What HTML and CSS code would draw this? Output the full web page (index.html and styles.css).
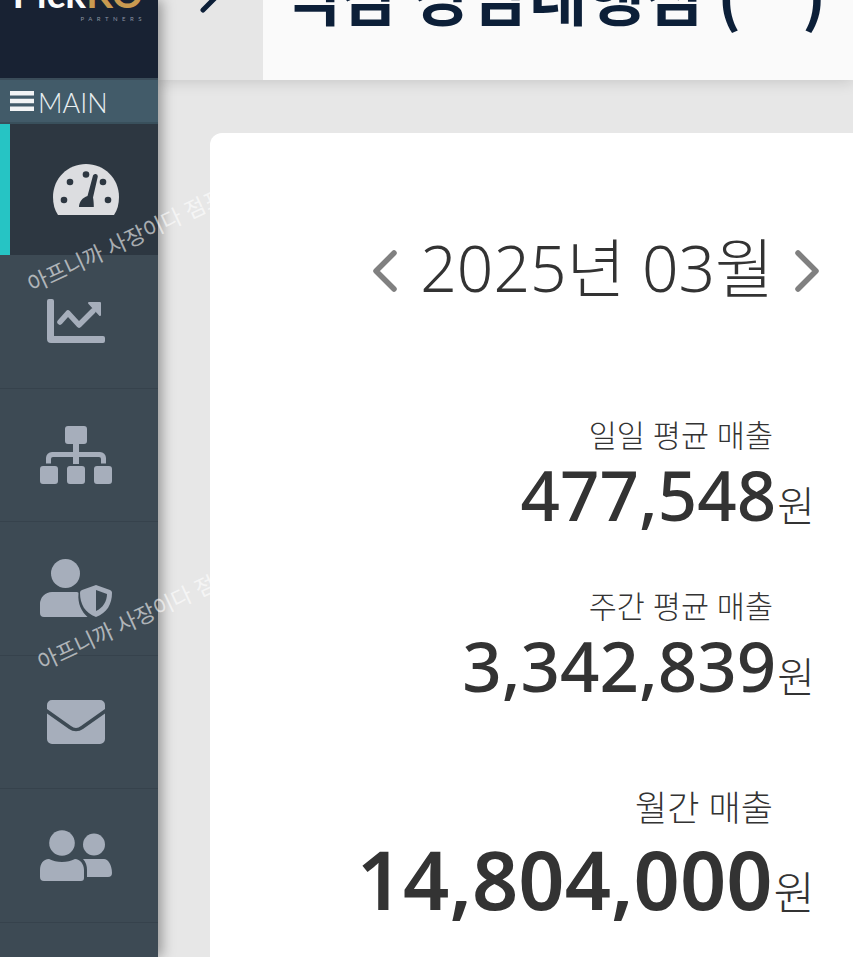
FILE: index.html
```html
<!DOCTYPE html>
<html>
<head>
    <meta charset="utf-8">
    <title>Dashboard</title>
    <link rel="stylesheet" href="styles.css">
</head>
<body>
    <div class="app">
        <aside class="sidebar">
            <div class="brand">
                <div class="logo"><span class="logo-white">Pick</span><span class="logo-gold">KO</span></div>
                <div class="logo-sub">PARTNERS</div>
            </div>
            <div class="main-bar">
                <svg class="bars" viewBox="0 0 24 20"><path d="M0 0h24v4.500H0zM0 7.700h24v4.500H0zM0 15.500h24V20H0z"/></svg>
                <span>MAIN</span>
            </div>
            <nav class="menu">
                <a class="menu-item active">
                    <svg width="66" height="52" viewBox="0 0 66 52"><path class="icon-light" d="M33 0C15 0 0 14 0 33c0 7 1.500 13 5 18h56c3.500-5 5-11 5-18C66 14 51 0 33 0z"/><g class="gauge-marks"><circle cx="33" cy="10.500" r="3.300"/><circle cx="17" cy="18" r="3.300"/><circle cx="50" cy="18" r="3.300"/><circle cx="11" cy="36" r="3.300"/><circle cx="55" cy="36" r="3.300"/><path d="M40 11.500a2.500 2.500 0 0 1 4.800 1L40 33.500c.5 2 .8 6 .8 9.500H26c0-5 3.500-9.500 8.500-11z"/></g></svg>
                </a>
                <a class="menu-item">
                    <svg width="58" height="44" viewBox="0 0 58 44"><path class="icon" d="M0 2a2 2 0 0 1 2-2h3a2 2 0 0 1 2 2v35h49a2 2 0 0 1 2 2v3a2 2 0 0 1-2 2H4a4 4 0 0 1-4-4z"/><path class="chart-line" d="M13 23l8-9 11 12 14-14"/><path class="icon" d="M42 3h11a1 1 0 0 1 1 1v12a1 1 0 0 1-1.700.700L41.300 4.700A1 1 0 0 1 42 3z"/></svg>
                </a>
                <a class="menu-item">
                    <svg width="72" height="58" viewBox="0 0 72 58"><path class="icon" d="M28 0h16a3 3 0 0 1 3 3v12a3 3 0 0 1-3 3h-5v8h21a6 6 0 0 1 6 6v5.500h-5V33a2 2 0 0 0-2-2H39v7h-6v-7H13a2 2 0 0 0-2 2v4.500H6V32a6 6 0 0 1 6-6h21v-8h-5a3 3 0 0 1-3-3V3a3 3 0 0 1 3-3zM3 40h12a3 3 0 0 1 3 3v12a3 3 0 0 1-3 3H3a3 3 0 0 1-3-3V43a3 3 0 0 1 3-3zM30 40h12a3 3 0 0 1 3 3v12a3 3 0 0 1-3 3H30a3 3 0 0 1-3-3V43a3 3 0 0 1 3-3zM57 40h12a3 3 0 0 1 3 3v12a3 3 0 0 1-3 3H57a3 3 0 0 1-3-3V43a3 3 0 0 1 3-3z"/></svg>
                </a>
                <a class="menu-item">
                    <svg width="72" height="58" viewBox="0 0 72 58"><circle class="icon" cx="25.500" cy="14.500" r="14.500"/><path class="icon" d="M12 33h24c1.500 0 3 .5 2.500 1.500-1 10 3 18 9 23.500H4a4 4 0 0 1-4-4v-9a12 12 0 0 1 12-12z"/><path class="icon" fill-rule="evenodd" d="M56 26l14 5a3 3 0 0 1 2 3c0 11-5 20-16 24-11-4-16-13-16-24a3 3 0 0 1 2-3zM56 31v21c7-3 11-10 11-17z"/></svg>
                </a>
                <a class="menu-item">
                    <svg width="58" height="44" viewBox="0 0 58 44"><path class="icon" d="M5 0h48a5 5 0 0 1 5 5v4L34 26a8 8 0 0 1-10 0L0 9V5a5 5 0 0 1 5-5zM0 13.500L22 29a12 12 0 0 0 14 0l22-15.500V39a5 5 0 0 1-5 5H5a5 5 0 0 1-5-5z"/></svg>
                </a>
                <a class="menu-item">
                    <svg width="72" height="51" viewBox="0 0 72 51"><circle class="icon" cx="22" cy="13" r="12.800"/><circle class="icon" cx="54" cy="14.500" r="11"/><path class="icon" d="M9 29c4 2 8 3 13 3s9-1 13-3c5 0 9 5 9 11v8a3 3 0 0 1-3 3H4a4 4 0 0 1-4-4v-7c0-6 3-11 9-11zM43 29h21c4 0 8 6 8 14a4 4 0 0 1-4 4H47v-7c0-4-1-8-4-11z"/></svg>
                </a>
            </nav>
        </aside>

        <div class="page">
            <header class="topbar">
                <div class="toggle">
                    <svg width="24" height="14" viewBox="0 0 24 14"><path d="M4 10L16 -2"/></svg>
                </div>
                <h1 class="shop-title"><span>역삼 상담대행점 (&nbsp;&nbsp;&nbsp;&nbsp;&#8202;)</span></h1>
            </header>
            <section class="card">
                <div class="month-nav">
                    <svg class="arrow arrow-prev" width="24" height="42" viewBox="0 0 24 42"><path d="M21 3L3 21l18 18"/></svg>
                    <span class="month">2025년 03월</span>
                    <svg class="arrow" width="24" height="42" viewBox="0 0 24 42"><path d="M3 3l18 18L3 39"/></svg>
                </div>
                <div class="stat stat-daily">
                    <div class="stat-label">일일 평균 매출</div>
                    <div class="stat-value"><strong>477,548</strong><span class="unit">원</span></div>
                </div>
                <div class="stat stat-weekly">
                    <div class="stat-label">주간 평균 매출</div>
                    <div class="stat-value"><strong>3,342,839</strong><span class="unit">원</span></div>
                </div>
                <div class="stat stat-monthly">
                    <div class="stat-label">월간 매출</div>
                    <div class="stat-value"><strong>14,804,000</strong><span class="unit">원</span></div>
                </div>
            </section>
        </div>

        <div class="watermark wm-one">아프니까 사장이다 점포거래</div>
        <div class="watermark wm-two">아프니까 사장이다 점포거래</div>
    </div>
</body>
</html>
```

FILE: styles.css
```css
html, body {
    margin: 0;
    height: 100%;
    overflow: hidden;
}

body {
    font-family: "Noto Sans", "Noto Sans CJK KR", sans-serif;
    background: #e7e7e7;
    color: #333;
}

.app {
    position: relative;
    display: flex;
    height: 957px;
    overflow: hidden;
}

/* sidebar */
.sidebar {
    width: 158px;
    flex: none;
    background: #3d4a54;
    box-shadow: 4px 0 12px rgba(0,0,0,0.35);
    z-index: 2;
}

.brand {
    height: 78px;
    box-sizing: border-box;
    background: #182233;
    overflow: hidden;
    text-align: right;
    padding-right: 15px;
}

.logo {
    font-family: "Lato", sans-serif;
    font-weight: 700;
    font-size: 39px;
    line-height: 40px;
    margin-top: -27px;
}

.logo-white { color: #fbfbfb; }
.logo-gold { color: #c99a50; }

.logo-sub {
    font-family: "Lato", sans-serif;
    font-size: 6px;
    line-height: 8px;
    letter-spacing: 4.500px;
    margin-top: 2px;
    margin-right: -3px;
    color: #8a93a0;
}

.main-bar {
    height: 46px;
    box-sizing: border-box;
    display: flex;
    align-items: center;
    gap: 4px;
    padding-left: 10px;
    background: #425b69;
    border-top: 2px solid #3a4c59;
    border-bottom: 2px solid #39505c;
    color: #e8eef0;
    font-family: "Lato", sans-serif;
    font-weight: 300;
    font-size: 27px;
}

.main-bar span {
    position: relative;
    top: 1px;
}

.bars {
    width: 24px;
    height: 20px;
    fill: #f2f4f5;
}

.menu-item {
    height: 133.600px;
    box-sizing: border-box;
    display: flex;
    align-items: center;
    justify-content: center;
    padding-right: 6px;
    border-bottom: 1px solid #36424c;
}

.menu-item.active {
    height: 131px;
    background: #2d3741;
    border-left: 10px solid #26c4c4;
    border-bottom: none;
    padding-right: 0;
    padding-left: 4px;
}

.icon { fill: #a6aebb; }
.icon-light { fill: #dcdde0; }
.gauge-marks { fill: #2d3741; }

.chart-line {
    fill: none;
    stroke: #a6aebb;
    stroke-width: 5.500;
    stroke-linecap: round;
    stroke-linejoin: round;
}

/* content */
.page {
    flex: 1;
    min-width: 0;
}

.topbar {
    display: flex;
    height: 80px;
    box-shadow: 0 2px 14px rgba(0,0,0,0.14);
    position: relative;
}

.toggle {
    width: 105px;
    flex: none;
    background: #e6e6e6;
    padding-left: 41px;
    box-sizing: border-box;
}

.toggle svg {
    display: block;
}

.toggle path {
    fill: none;
    stroke: #0c1f38;
    stroke-width: 5;
    stroke-linecap: round;
}

.shop-title {
    flex: 1;
    display: flex;
    align-items: flex-end;
    margin: 0;
    padding: 0 0 57px 20px;
    background: #fafafa;
    color: #0c1f38;
    font-family: "Noto Sans CJK KR", sans-serif;
    font-size: 63px;
    font-weight: 700;
    line-height: 60px;
    white-space: nowrap;
    overflow: hidden;
}

.card {
    margin: 53px 0 0 52px;
    height: 900px;
    box-sizing: border-box;
    background: white;
    border-radius: 12px 0 0 12px;
    padding-right: 38px;
    text-align: right;
}

.month-nav {
    display: flex;
    align-items: center;
    justify-content: flex-end;
    gap: 21px;
    padding-top: 100px;
    margin-right: -4px;
}

.month {
    font-weight: 300;
    font-size: 64px;
    line-height: 70px;
    color: #333;
}

.arrow {
    margin-top: 6px;
}

.arrow-prev {
    margin-right: 2px;
}

.arrow path {
    fill: none;
    stroke: #808080;
    stroke-width: 5.500;
    stroke-linecap: round;
    stroke-linejoin: round;
}

.stat-label {
    font-weight: 200;
    font-size: 30.500px;
    line-height: 40px;
    padding-right: 42px;
}

.stat-value {
    line-height: 72px;
    padding-top: 3px;
    white-space: nowrap;
}

.stat-value strong {
    font-weight: 500;
    font-size: 69px;
}

.unit {
    font-weight: 200;
    font-size: 41px;
    margin-left: 1px;
}

.stat-daily { margin-top: 112px; }
.stat-weekly { margin-top: 35px; }
.stat-monthly { margin-top: 66px; }

.stat-monthly .stat-label {
    font-size: 35px;
}

.stat-monthly .stat-value {
    padding-top: 15px;
}

.stat-monthly .stat-value strong {
    font-weight: 600;
    font-size: 81px;
}

.stat-monthly .unit {
    font-size: 45px;
}

/* watermark over the page */
.watermark {
    position: absolute;
    z-index: 3;
    color: rgba(255,255,255,0.6);
    font-size: 22px;
    white-space: nowrap;
    transform: rotate(-25deg);
    transform-origin: left center;
}

.wm-one { left: 28px; top: 268px; }
.wm-two { left: 38px; top: 646px; }
```
